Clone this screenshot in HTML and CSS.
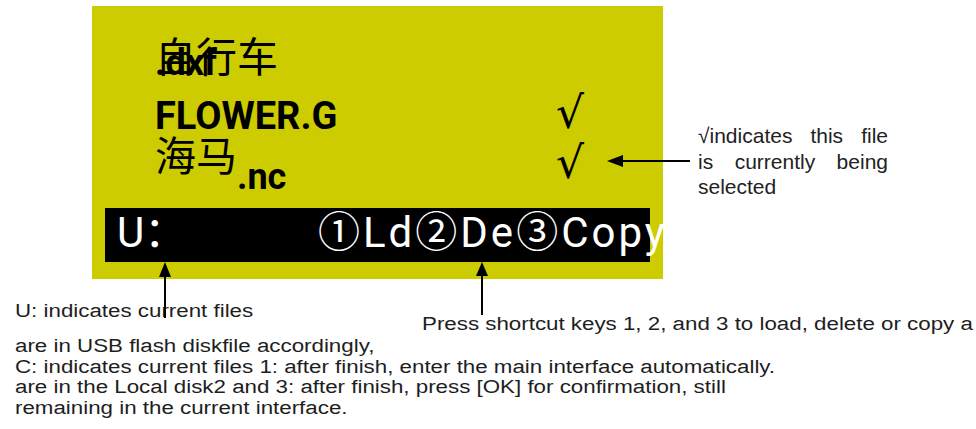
FILE: index.html
```html
<!DOCTYPE html>
<html>
	<head>
		<meta charset="utf-8">
		<title>File list</title>
		<link rel="stylesheet" href="styles.css">
	</head>
	<body>
		<div class="page">
			<div class="top">
				<div class="screen">
					<div class="files">
						<div class="row row1">
							<div class="name"><span class="cn over">自行车</span><span class="ext dxf">.dxf</span></div>
							<div class="mark"></div>
						</div>
						<div class="row row2">
							<div class="name"><span class="en">FLOWER.G</span></div>
							<div class="mark">√</div>
						</div>
						<div class="row row3">
							<div class="name"><span class="cn">海马</span><span class="ext nc">.nc</span></div>
							<div class="mark">√</div>
						</div>
					</div>
					<div class="bar">
						<span class="disk">U：</span>
						<span class="keys">①Ld②De③Copy</span>
					</div>
				</div>
				<p class="side-note">√indicates this file<br>is currently being<br>selected</p>
			</div>

			<div class="notes">
				<div class="notes-row">
					<p class="note note-left">U: indicates current files</p>
					<p class="note note-right">Press shortcut keys 1, 2, and 3 to load, delete or copy a</p>
				</div>
				<p class="note note-body">are in USB flash diskfile accordingly,<br>C: indicates current files 1: after finish, enter the main interface automatically.<br>are in the Local disk2 and 3: after finish, press [OK] for confirmation, still<br>remaining in the current interface.</p>
			</div>

			<!-- 指示箭头 -->
			<svg class="arrows" width="976" height="429" viewBox="0 0 976 429">
				<polygon points="165,262 159,277 171,277" />
				<line x1="165" y1="276" x2="165" y2="318" />
				<polygon points="482,262 476,276 488,276" />
				<line x1="482" y1="275" x2="482" y2="315" />
				<polygon points="607,161 623,155 623,167" />
				<line x1="622" y1="161" x2="690" y2="161" />
			</svg>
		</div>
	</body>
</html>
```

FILE: styles.css
```css
*{
	padding: 0px;
	margin: 0px;
}
body{
	background-color: #ffffff;
	font-family: "Liberation Sans", Arial, sans-serif;
}
.page{
	width: 976px;
	height: 429px;
	position: relative;
	overflow: hidden;
}
.top{
	display: flex;
}
.screen{
	width: 571px;
	height: 273px;
	margin: 6px 0px 0px 92px;
	padding-bottom: 17px;
	box-sizing: border-box;
	background-color: #cccc00;
	overflow: hidden;
	display: flex;
	flex-direction: column;
}
.files{
	padding: 30px 0px 0px 63px;
}
.row{
	display: flex;
	align-items: flex-end;
	line-height: 1;
}
.row1{
	height: 45px;
}
.row2{
	height: 54px;
}
.row3{
	height: 60px;
}
.row3 .mark{
	margin-bottom: 10px;
}
.name{
	width: 401px;
	color: #000;
}
.cn{
	font-family: "Noto Sans CJK SC", sans-serif;
	font-size: 41px;
}
.over{
	display: inline-block;
	width: 0px;
	white-space: nowrap;
}
.ext, .en{
	font-family: Roboto, sans-serif;
	font-weight: bold;
}
.ext{
	font-size: 36px;
}
.dxf{
	vertical-align: -3px;
}
.nc{
	vertical-align: -18px;
}
.en{
	font-size: 38px;
}
.mark{
	font-family: "DejaVu Sans", sans-serif;
	font-size: 44px;
	color: #000;
}
.bar{
	margin: auto 13px 0px 13px;
	height: 54px;
	background-color: #000;
	color: #fff;
	font-family: Roboto, "Noto Sans CJK SC", sans-serif;
	font-size: 42px;
	line-height: 49px;
	white-space: nowrap;
	display: flex;
}
.disk{
	margin-left: 12px;
	width: 201px;
	flex-shrink: 0;
}
.keys{
	flex-shrink: 0;
	letter-spacing: 3px;
}
.side-note{
	width: 190px;
	margin: 123px 0px 0px 35px;
	font-size: 21px;
	line-height: 25.5px;
	text-align: justify;
	text-align-last: justify;
	color: #222;
}
.notes{
	padding: 22px 0px 0px 15px;
}
.notes-row{
	display: flex;
}
.note{
	font-size: 18px;
	line-height: 21px;
	color: #1e1e1e;
	white-space: nowrap;
	transform: scaleX(1.24);
	transform-origin: 0 0;
}
.note-left{
	width: 407px;
}
.note-right{
	margin-top: 13px;
}
.note-body{
	margin-top: 1px;
	line-height: 20.7px;
}
.arrows{
	position: absolute;
	left: 0px;
	top: 0px;
}
.arrows polygon{
	fill: #000;
}
.arrows line{
	stroke: #000;
	stroke-width: 2;
}
```
